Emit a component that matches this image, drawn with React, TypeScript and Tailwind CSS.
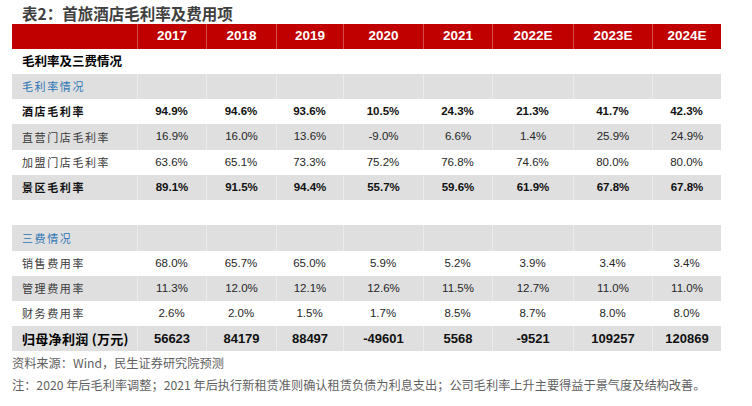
import React from 'react';

type Row = {
  label: string;
  values?: string[];
  kind: 'section' | 'group' | 'bold' | 'normal' | 'blank' | 'total';
  gray: boolean;
  tall?: boolean;
};

const years = ['2017', '2018', '2019', '2020', '2021', '2022E', '2023E', '2024E'];

const colWidths = ['w-[125px]', 'w-[69px]', 'w-[70px]', 'w-[67px]', 'w-[80px]', 'w-[69px]', 'w-[81px]', 'w-[79px]', 'w-[69px]'];

const rows: Row[] = [
  { label: '毛利率及三费情况', kind: 'section', gray: false },
  { label: '毛利率情况', kind: 'group', gray: true },
  { label: '酒店毛利率', kind: 'bold', gray: false, values: ['94.9%', '94.6%', '93.6%', '10.5%', '24.3%', '21.3%', '41.7%', '42.3%'] },
  { label: '直营门店毛利率', kind: 'normal', gray: true, tall: true, values: ['16.9%', '16.0%', '13.6%', '-9.0%', '6.6%', '1.4%', '25.9%', '24.9%'] },
  { label: '加盟门店毛利率', kind: 'normal', gray: false, values: ['63.6%', '65.1%', '73.3%', '75.2%', '76.8%', '74.6%', '80.0%', '80.0%'] },
  { label: '景区毛利率', kind: 'bold', gray: true, values: ['89.1%', '91.5%', '94.4%', '55.7%', '59.6%', '61.9%', '67.8%', '67.8%'] },
  { label: '', kind: 'blank', gray: false },
  { label: '三费情况', kind: 'group', gray: true, tall: true },
  { label: '销售费用率', kind: 'normal', gray: false, values: ['68.0%', '65.7%', '65.0%', '5.9%', '5.2%', '3.9%', '3.4%', '3.4%'] },
  { label: '管理费用率', kind: 'normal', gray: true, values: ['11.3%', '12.0%', '12.1%', '12.6%', '11.5%', '12.7%', '11.0%', '11.0%'] },
  { label: '财务费用率', kind: 'normal', gray: false, values: ['2.6%', '2.0%', '1.5%', '1.7%', '8.5%', '8.7%', '8.0%', '8.0%'] },
  { label: '归母净利润 (万元)', kind: 'total', gray: true, values: ['56623', '84179', '88497', '-49601', '5568', '-9521', '109257', '120869'] },
];

const labelClass = (kind: Row['kind']) => {
  if (kind === 'section') return 'text-[12.5px] font-bold text-black tracking-normal';
  if (kind === 'total') return 'text-[13px] font-bold text-black tracking-[0.3px]';
  if (kind === 'group') return 'text-[11px] text-[#2e75b6] tracking-[1.6px]';
  if (kind === 'bold') return 'text-[11px] font-bold text-[#111] tracking-[1.6px]';
  return 'text-[11px] text-[#3a3a3a] tracking-[1.6px]';
};

const valueClass = (kind: Row['kind']) => {
  if (kind === 'total') return 'text-[13px] font-bold text-[#111]';
  if (kind === 'bold') return 'text-[11.5px] font-bold text-[#111]';
  return 'text-[11.5px] text-[#262626]';
};

const App = () => {
  return (
    <div className="w-[752px] h-[406px] bg-white overflow-hidden">
      <div className="pl-[22px] pt-[3px] h-[24px] text-[15.5px] leading-[20px] font-bold text-[#404040] font-['Noto_Sans_CJK_SC',sans-serif]">
        表2：首旅酒店毛利率及费用项
      </div>

      <div className="ml-[12px] w-[709px]">
        <div className="flex h-[25px] bg-[#c00000]">
          {['', ...years].map((y, i) => (
            <div
              key={i}
              className={`${colWidths[i]} ${i > 0 ? 'border-l border-[#d94a4a]' : ''} flex items-center justify-center text-white font-bold text-[13.5px] font-['Liberation_Sans',Arial,sans-serif]`}
            >
              {y}
            </div>
          ))}
        </div>

        {rows.map((row, r) => (
          <div
            key={r}
            className={`flex ${row.tall ? 'h-[26px]' : 'h-[25px]'} ${row.gray ? 'bg-[#dfdfdf]' : 'bg-white'}`}
          >
            <div
              className={`${colWidths[0]} flex items-center pl-[10px] whitespace-nowrap font-['Noto_Sans_CJK_SC',sans-serif] ${labelClass(row.kind)}`}
            >
              {row.label}
            </div>
            {years.map((_, c) => (
              <div
                key={c}
                className={`${colWidths[c + 1]} ${row.gray ? 'border-l border-[#ebebeb]' : ''} flex items-center justify-center font-['Liberation_Sans',Arial,sans-serif] ${valueClass(row.kind)}`}
              >
                {row.values ? row.values[c] : ''}
              </div>
            ))}
          </div>
        ))}
      </div>

      <div className="pl-[12px] pt-[1px] text-[12.2px] leading-[22px] text-[#5f5f5f] font-['Noto_Sans_CJK_SC',sans-serif]">
        <div>资料来源：Wind，民生证券研究院预测</div>
        <div>注：2020 年后毛利率调整；2021 年后执行新租赁准则确认租赁负债为利息支出；公司毛利率上升主要得益于景气度及结构改善。</div>
      </div>
    </div>
  );
};

export default App;
